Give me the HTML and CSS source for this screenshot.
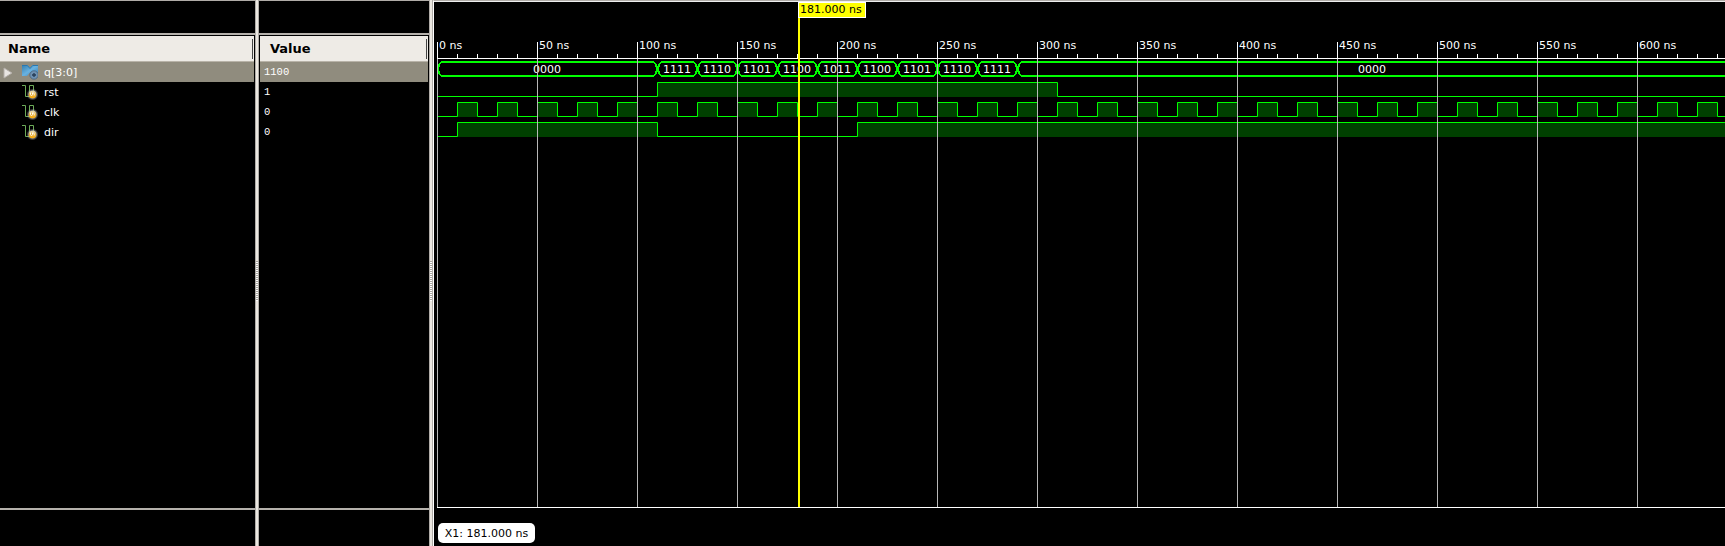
FILE: index.html
```
<!DOCTYPE html>
<html lang="en">
<head>
<meta charset="utf-8">
<title>Waveform viewer</title>
<link rel="stylesheet" href="styles.css">
</head>
<body>
<svg class="defs" width="0" height="0" aria-hidden="true">
  <defs>
    <radialGradient id="halo"><stop offset=".45" stop-color="#bbb"/><stop offset="1" stop-color="#aaa" stop-opacity="0"/></radialGradient>
    <linearGradient id="gold" x2="0" y2="1"><stop stop-color="#e8e0c0"/><stop offset=".5" stop-color="#e5b03c"/><stop offset="1" stop-color="#ffad08"/></linearGradient>
    <linearGradient id="blue" x2="1" y2="1"><stop stop-color="#337eb0"/><stop offset=".5" stop-color="#69b2e0"/><stop offset="1" stop-color="#317aaf"/></linearGradient>
    <symbol id="signal" viewBox="0 0 16 16">
      <path d="M0 1.5h3.500v11H7.500V1.500h4V8" fill="none" stroke="#6caa58"/>
      <circle cx="10.500" cy="10.500" r="6" fill="url(#halo)"/>
      <circle cx="10.500" cy="10.500" r="3.800" fill="url(#gold)"/>
      <path d="M8.500 8.500v2q0 1 1 1t1-1v-2m0 1q1-1 1.700 0v2" fill="none" stroke="#fff" stroke-width=".9"/>
    </symbol>
    <symbol id="bus" viewBox="0 0 16 16">
      <path d="M0 1h5.500L8 4l2.500-3H16v10h-5L8 8.500 5 12H0z" fill="url(#blue)"/>
      <path d="M0 1.500h5.300L8 4.500l2.700-3H16" fill="none" stroke="#2878b2"/>
      <circle cx="12" cy="11" r="4.200" fill="#6d91b2" stroke="#48617b" stroke-width=".8"/>
      <path d="M12 9v4M10 11h4" stroke="#263b55" stroke-width="1.300"/>
    </symbol>
  </defs>
</svg>
<div class="viewer">
  <section class="pane names">
    <div class="top"></div>
    <div class="head"><span>Name</span></div>
    <div class="list">
      <div class="row selected"><svg class="arrow" viewBox="0 0 10 12"><path d="M1 1v10l8-5z" fill="#e8e5e2" stroke="#b4afa9"/></svg><svg class="icon"><use href="#bus"/></svg><span>q[3:0]</span></div>
      <div class="row"><i class="arrow"></i><svg class="icon"><use href="#signal"/></svg><span>rst</span></div>
      <div class="row"><i class="arrow"></i><svg class="icon"><use href="#signal"/></svg><span>clk</span></div>
      <div class="row"><i class="arrow"></i><svg class="icon"><use href="#signal"/></svg><span>dir</span></div>
    </div>
    <div class="foot"></div>
  </section>
  <div class="splitter"><i class="grip"></i></div>
  <section class="pane values">
    <div class="top"></div>
    <div class="head"><span>Value</span></div>
    <div class="list">
      <div class="row selected">1100</div>
      <div class="row">1</div>
      <div class="row">0</div>
      <div class="row">0</div>
    </div>
    <div class="foot"></div>
  </section>
  <div class="splitter"><i class="grip"></i></div>
  <section class="waves">
    <svg id="plot" class="plot" width="1291" height="544" viewBox="434 2 1291 544"></svg>
    <div class="marker">X1: 181.000 ns</div>
  </section>
</div>
<script src="waves.js"></script>
</body>
</html>
```
FILE: styles.css
```
body { margin: 0; background: #000; color: #fff; font-family: "DejaVu Sans", sans-serif; font-size: 11px; overflow: hidden; }
.defs { position: absolute; }
.viewer { display: flex; width: 1725px; height: 546px; }
.pane { display: flex; flex-direction: column; box-sizing: border-box; border-top: 1px solid #b0aca7; }
.names { width: 255px; }
.values { width: 170px; }
.top { height: 32px; border-bottom: 2px solid #b5b1ac; }
.head { height: 26px; margin: 1px 1px 0; display: flex; align-items: flex-start; justify-content: space-between; box-sizing: border-box; background: #eeebe6; border-bottom: 1px solid #b8b3a8; font-size: 13px; font-weight: bold; color: #000; }
.head span { padding-left: 8px; line-height: 25px; }
.names .head, .names .row { margin-left: 0; }
.values .head span { padding-left: 10px; }
.head::after { content: ""; width: 1px; height: 20px; margin: 3px 1px 0 0; background: #444; }
.list { flex: 1; }
.row { display: flex; align-items: center; height: 20px; margin: 0 1px; line-height: 20px; }
.selected { background: #908c7e; }
.arrow { width: 10px; height: 12px; margin: 1px 9px 0 3px; }
.icon { width: 16px; height: 16px; margin-right: 6px; }
.names .row span { padding-top: 2px; }
.values .row { padding-left: 4px; font-family: "Liberation Mono", monospace; font-size: 10.5px; box-sizing: border-box; }
.foot { height: 36px; border-top: 2px solid #b5b1ac; }
.splitter { width: 4px; box-sizing: border-box; display: flex; align-items: flex-start; border: 1px solid #b0aca7; border-width: 0 1px; background: #ebe7e1; }
.grip { width: 2px; height: 40px; margin-top: 261px; background: repeating-linear-gradient(#aaa6a0 0 1px, #fff 1px 2px); }
.waves { position: relative; flex: 1; box-sizing: border-box; border-top: 1px solid #b0aca7; border-left: 1px solid #fff; box-shadow: inset 0 1px #eee; padding-top: 1px; }
.plot { display: block; font-family: "DejaVu Sans", sans-serif; font-size: 11px; fill: #fff; }
.marker { position: absolute; left: 4px; top: 522px; width: 97px; height: 20px; border-radius: 5px; background: #fff; color: #000; line-height: 22px; text-align: center; }
.line { fill: none; stroke: #0f0; }
.bus { fill: none; stroke: #0f0; stroke-width: 2; shape-rendering: crispEdges; }
.fill { fill: #004000; }
.grid { stroke: #b8b8b8; }
.axis { stroke: #fff; }
.cursor { fill: #ff0; }
.tag { fill: #ff0; stroke: #fff; }
.tag-text { fill: #000; }
```
FILE: waves.js
```
const plot = document.getElementById("plot");
const origin = 437, end = 1725;
const x = ns => origin + ns * 2;
function add(name, attrs, text) {
  const node = document.createElementNS("http://www.w3.org/2000/svg", name);
  for (const key in attrs) node.setAttribute(key, attrs[key]);
  if (text) node.textContent = text;
  plot.appendChild(node);
}

function digital(high, changes, start) {
  const low = high + 14;
  let level = start, path = `M437.5 ${(level ? high : low) + 0.5}`, from = 0;
  for (const t of [...changes, 644]) {
    if (level) add("rect", { class: "fill", x: x(from), y: high, width: x(t) - x(from), height: 15 });
    path += `H${Math.min(x(t) + 0.5, end)}`;
    if (t < 644) {
      level = !level;
      path += `V${(level ? high : low) + 0.5}`;
    }
    from = t;
  }
  add("path", { class: "line", d: path });
}
digital(82, [110, 310], false);
digital(102, Array.from({ length: 64 }, (_, i) => (i + 1) * 10), false);
digital(122, [10, 110, 210], false);

const segments = [[0, 110, "0000"], [110, 130, "1111"], [130, 150, "1110"], [150, 170, "1101"], [170, 190, "1100"], [190, 210, "1011"], [210, 230, "1100"], [230, 250, "1101"], [250, 270, "1110"], [270, 290, "1111"], [290, 650, "0000"]];
for (const [a, b, label] of segments) {
  const l = x(a) + 0.5, r = x(b) + 0.5;
  add("path", { class: "bus", d: `M${l} 69L${l + 2} 64L${l + 4} 62H${r - 4}L${r - 2} 64L${r} 69L${r - 2} 74L${r - 4} 76H${l + 4}L${l + 2} 74Z` });
  add("text", { x: b === 650 ? 1358 : x(a) + (b - a) - 14, y: 73 }, label);
}

add("path", { class: "axis", d: "M437 58.5H1725M437 507.5H1725" });
for (let t = 0; t < 650; t += 10) {
  const px = x(t) + 0.5, major = t % 50 === 0;
  add("path", { class: "axis", d: `M${px} ${major ? 42 : 54}V58` });
  if (major) {
    add("path", { class: "grid", d: `M${px} 59V507` });
    add("text", { x: x(t) + 2, y: 49 }, `${t} ns`);
  }
}

add("rect", { class: "cursor", x: 798, y: 2, width: 2, height: 505 });
add("rect", { class: "tag", x: 798.5, y: 2.5, width: 67, height: 15 });
add("text", { class: "tag-text", x: 800, y: 13 }, "181.000 ns");
```
